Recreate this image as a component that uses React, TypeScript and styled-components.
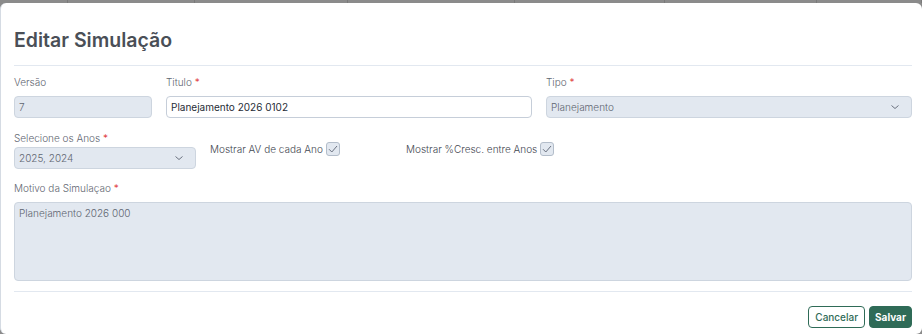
import styled, { createGlobalStyle } from "styled-components";

const GlobalStyle = createGlobalStyle`
  html, body {
    margin: 0;
    padding: 0;
    background: #8b8b8b;
    font-family: Inter, "Noto Sans", sans-serif;
  }
  * { box-sizing: border-box; }
`;

const Page = styled.div`
  width: 922px;
  height: 334px;
  overflow: hidden;
  display: flex;
  flex-direction: column;
`;

const Backdrop = styled.div`
  height: 3px;
  display: flex;
  flex-shrink: 0;
`;

const BackdropCell = styled.div<{ $w: number }>`
  width: ${(p) => p.$w}px;
  border-right: 1px solid #7a7a7a;
`;

const Modal = styled.div`
  flex: 1;
  background: #fff;
  border-radius: 6px;
  border-left: 1px solid #d5dbe3;
  padding: 0 10px 0 13px;
  display: flex;
  flex-direction: column;
`;

const Header = styled.div`
  height: 63px;
  border-bottom: 1px solid #e2e8f0;
  display: flex;
  align-items: center;
  padding-top: 12px;
`;

const Title = styled.h2`
  margin: 0;
  font-size: 19.5px;
  font-weight: 600;
  color: #4a4f57;
`;

const Body = styled.div`
  display: flex;
  flex-direction: column;
  padding-top: 9px;
  border-bottom: 1px solid #e2e8f0;
  padding-bottom: 10px;
`;

const Row = styled.div<{ $cols: string; $mb?: number }>`
  display: grid;
  grid-template-columns: ${(p) => p.$cols};
  column-gap: 14px;
  align-items: start;
  margin-bottom: ${(p) => p.$mb ?? 0}px;
`;

const Field = styled.div`
  display: flex;
  flex-direction: column;
`;

const Label = styled.label<{ $gap?: number }>`
  font-size: 10px;
  line-height: 14px;
  font-weight: 300;
  color: #5f6671;
  margin-bottom: ${(p) => p.$gap ?? 7}px;
`;

const Req = styled.span`
  color: #dc2626;
`;

const Input = styled.div<{ $disabled?: boolean }>`
  height: 22px;
  border: 1px solid ${(p) => (p.$disabled ? "#cdd5df" : "#c6ced9")};
  border-radius: 4px;
  background: ${(p) => (p.$disabled ? "#e2e8f0" : "#fff")};
  font-size: 10px;
  font-weight: ${(p) => (p.$disabled ? 300 : 400)};
  color: ${(p) => (p.$disabled ? "#5f6671" : "#262c36")};
  padding: 0 4px;
  display: flex;
  align-items: center;
  justify-content: space-between;
`;

const Chevron = styled.svg`
  width: 10px;
  height: 10px;
  margin-right: 7px;
  color: #6b7280;
`;

const CheckItem = styled.div`
  display: flex;
  align-items: center;
  gap: 3px;
  font-size: 10px;
  font-weight: 300;
  color: #3f4650;
  padding-top: 11px;
`;

const Box = styled.span`
  width: 14px;
  height: 14px;
  border-radius: 3px;
  border: 1px solid #b3bdca;
  background: #e2e8f0;
  display: inline-flex;
  align-items: center;
  justify-content: center;
`;

const TextArea = styled.div`
  height: 79px;
  border: 1px solid #cdd5df;
  border-radius: 4px;
  background: #e2e8f0;
  font-size: 10px;
  font-weight: 300;
  color: #5f6671;
  padding: 4px 4px;
`;

const Footer = styled.div`
  display: flex;
  justify-content: flex-end;
  gap: 4px;
  padding-top: 14px;
`;

const Button = styled.button<{ $primary?: boolean }>`
  height: 22px;
  padding: 0 ${(p) => (p.$primary ? 5 : 6)}px;
  border-radius: 4px;
  font-family: Inter, "Noto Sans", sans-serif;
  font-size: 10px;
  font-weight: ${(p) => (p.$primary ? 700 : 500)};
  border: 1px solid #2f6b57;
  background: ${(p) => (p.$primary ? "#2f6b57" : "#fff")};
  color: ${(p) => (p.$primary ? "#fff" : "#2f6b57")};
`;

function ChevronDown() {
  return (
    <Chevron viewBox="0 0 10 10" fill="none" stroke="currentColor" strokeWidth={1}>
      <polyline points="1.5,3.5 5,6.5 8.5,3.5" />
    </Chevron>
  );
}

function Check() {
  return (
    <Box>
      <svg width="12" height="12" viewBox="0 0 12 12" fill="none" stroke="#6b7280" strokeWidth={1}>
        <polyline points="2,6.2 4.8,9 10,3" />
      </svg>
    </Box>
  );
}

export default function App() {
  return (
    <>
      <GlobalStyle />
      <Page>
        <Backdrop>
          {[68, 127, 153, 167, 150, 152, 105].map((w, i) => (
            <BackdropCell key={i} $w={w} />
          ))}
        </Backdrop>
        <Modal>
          <Header>
            <Title>Editar Simulação</Title>
          </Header>
          <Body>
            <Row $cols="138px 366px 366px" $mb={13}>
              <Field>
                <Label>Versão</Label>
                <Input $disabled>7</Input>
              </Field>
              <Field>
                <Label>
                  Titulo <Req>*</Req>
                </Label>
                <Input>Planejamento 2026 0102</Input>
              </Field>
              <Field>
                <Label>
                  Tipo <Req>*</Req>
                </Label>
                <Input $disabled>
                  Planejamento
                  <ChevronDown />
                </Input>
              </Field>
            </Row>
            <Row $cols="182px 182px 200px" $mb={12}>
              <Field>
                <Label $gap={2}>
                  Selecione os Anos <Req>*</Req>
                </Label>
                <Input $disabled>
                  2025, 2024
                  <ChevronDown />
                </Input>
              </Field>
              <CheckItem>
                Mostrar AV de cada Ano
                <Check />
              </CheckItem>
              <CheckItem>
                Mostrar %Cresc. entre Anos
                <Check />
              </CheckItem>
            </Row>
            <Field>
              <Label>
                Motivo da Simulaçao <Req>*</Req>
              </Label>
              <TextArea>Planejamento 2026 000</TextArea>
            </Field>
          </Body>
          <Footer>
            <Button>Cancelar</Button>
            <Button $primary>Salvar</Button>
          </Footer>
        </Modal>
      </Page>
    </>
  );
}
